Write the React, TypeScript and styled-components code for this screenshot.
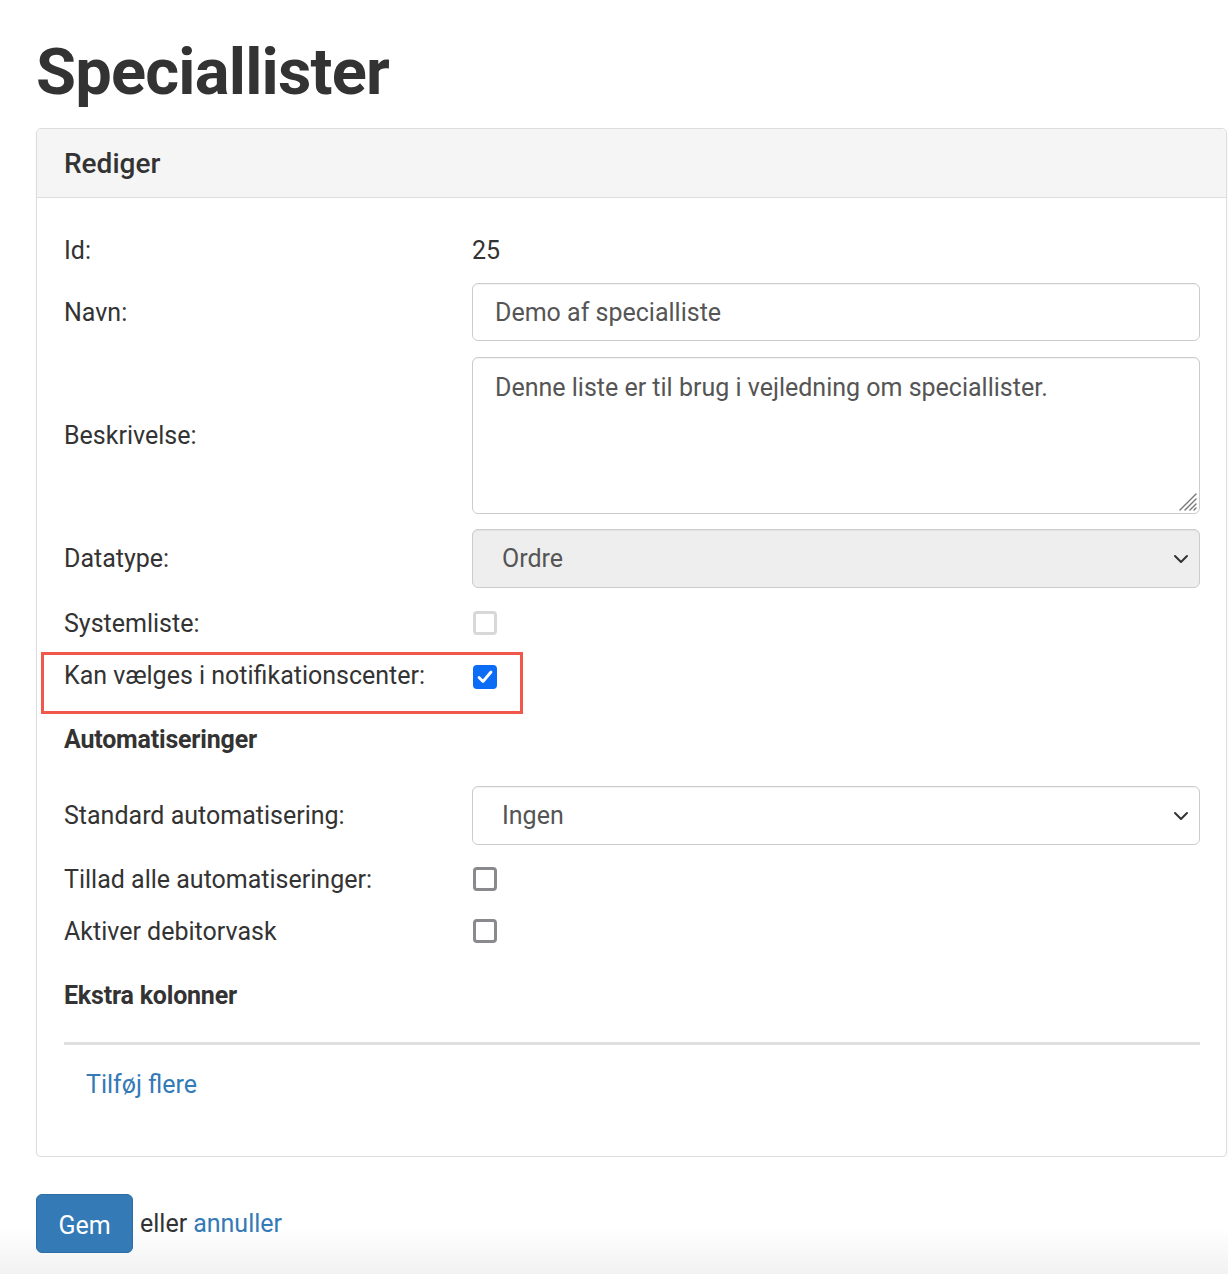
import React from "react";
import styled, { createGlobalStyle } from "styled-components";

const COLOR_TEXT = "#333333";
const COLOR_INPUT_TEXT = "#555555";
const COLOR_LINK = "#337ab7";
const COLOR_BORDER = "#cccccc";
const COLOR_PANEL_BORDER = "#dddddd";

const GlobalStyle = createGlobalStyle`
  html, body {
    margin: 0;
    padding: 0;
    background: #ffffff;
  }
  body {
    font-family: Roboto, "Liberation Sans", Arial, sans-serif;
    color: ${COLOR_TEXT};
  }
  * {
    box-sizing: border-box;
  }
`;

const Page = styled.div`
  min-height: 1274px;
  display: flex;
  flex-direction: column;
  padding: 0 0 0 36px;
`;

const PageTitle = styled.h1`
  font-size: 65px;
  font-weight: 700;
  line-height: 1;
  margin: 40px 0 23px 0;
  letter-spacing: -0.8px;
  color: ${COLOR_TEXT};
`;

const Panel = styled.section`
  width: 1191px;
  border: 1px solid ${COLOR_PANEL_BORDER};
  border-radius: 5px;
  background: #ffffff;
  box-shadow: 0 1px 2px rgba(0, 0, 0, 0.06);
`;

const PanelHeading = styled.header`
  height: 69px;
  display: flex;
  align-items: center;
  padding: 1px 27px 0;
  background: #f5f5f5;
  border-bottom: 1px solid ${COLOR_PANEL_BORDER};
  border-radius: 5px 5px 0 0;

  > h2 {
    margin: 0;
    font-size: 28px;
    font-weight: 500;
    color: ${COLOR_TEXT};
  }
`;

const PanelBody = styled.div`
  display: flex;
  flex-direction: column;
  padding: 35px 26px 55px 27px;
`;

const FormRow = styled.div<{ $top?: number; $height?: number }>`
  position: relative;
  display: grid;
  grid-template-columns: 408px 1fr;
  align-items: center;
  min-height: ${({ $height }) => $height ?? 34}px;
  margin-top: ${({ $top }) => $top ?? 16}px;

  &:first-child {
    margin-top: 0;
  }
`;

const Label = styled.label`
  font-size: 25px;
  color: ${COLOR_TEXT};
`;

const StaticValue = styled.span`
  font-size: 25px;
  color: ${COLOR_TEXT};
`;

const SectionTitle = styled.h3<{ $top: number }>`
  margin: ${({ $top }) => $top}px 0 0 0;
  height: 34px;
  display: flex;
  align-items: center;
  font-size: 25px;
  font-weight: 700;
  letter-spacing: -0.2px;
  color: ${COLOR_TEXT};
`;

const TextInput = styled.input`
  height: 58px;
  width: 100%;
  padding: 0 22px;
  font-family: inherit;
  font-size: 25px;
  color: ${COLOR_INPUT_TEXT};
  border: 1px solid ${COLOR_BORDER};
  border-radius: 6px;
  background: #ffffff;
  box-shadow: inset 0 1px 1px rgba(0, 0, 0, 0.05);
  outline: none;
`;

const TextAreaWrap = styled.div`
  position: relative;
  height: 157px;
`;

const TextArea = styled.textarea`
  display: block;
  width: 100%;
  height: 100%;
  padding: 14px 22px;
  font-family: inherit;
  font-size: 25px;
  line-height: 1.25;
  color: ${COLOR_INPUT_TEXT};
  border: 1px solid ${COLOR_BORDER};
  border-radius: 6px;
  background: #ffffff;
  box-shadow: inset 0 1px 1px rgba(0, 0, 0, 0.05);
  resize: none;
  outline: none;
`;

const ResizeGrip = styled.svg`
  position: absolute;
  right: 3px;
  bottom: 3px;
  width: 22px;
  height: 22px;
`;

const SelectBox = styled.div<{ $disabled?: boolean }>`
  position: relative;
  height: 59px;
  display: flex;
  align-items: center;
  padding: 0 29px;
  font-size: 25px;
  color: ${COLOR_INPUT_TEXT};
  border: 1px solid ${COLOR_BORDER};
  border-radius: 6px;
  background: ${({ $disabled }) => ($disabled ? "#eeeeee" : "#ffffff")};
  box-shadow: inset 0 1px 1px rgba(0, 0, 0, 0.05);

  > svg {
    position: absolute;
    right: 10px;
    top: 50%;
    transform: translateY(-50%);
  }
`;

const CheckBox = styled.span<{ $variant: "disabled" | "checked" | "empty" }>`
  display: inline-flex;
  align-items: center;
  justify-content: center;
  width: 24px;
  height: 24px;
  margin: 4px 0 0 1px;
  border-radius: 4px;
  ${({ $variant }) =>
    $variant === "checked"
      ? `background: #0b6cf5; border: none;`
      : $variant === "disabled"
      ? `background: #ffffff; border: 3px solid #d8d8d8;`
      : `background: #ffffff; border: 3px solid #8a8a8e;`}
`;

const Highlight = styled.div`
  position: absolute;
  left: -23px;
  top: -6px;
  width: 482px;
  height: 62px;
  border: 3px solid #f0584c;
  pointer-events: none;
`;

const Divider = styled.hr`
  margin: 30px 0 0 0;
  border: none;
  border-top: 3px solid #e0e0e0;
  width: 100%;
`;

const AddMore = styled.a`
  margin: 22px 0 0 22px;
  height: 34px;
  display: flex;
  align-items: center;
  font-size: 25px;
  color: ${COLOR_LINK};
  text-decoration: none;
  cursor: pointer;
`;

const ActionBar = styled.div`
  flex: 1;
  margin-left: -36px;
  padding: 37px 0 0 36px;
  display: flex;
  align-items: flex-start;
  gap: 7px;
  background: linear-gradient(to bottom, #ffffff 0px, #ffffff 70px, #f2f2f2 117px);
`;

const PrimaryButton = styled.button`
  width: 97px;
  height: 59px;
  border: 1px solid #2e6da4;
  border-radius: 6px;
  background: ${COLOR_LINK};
  color: #ffffff;
  font-family: inherit;
  font-size: 25px;
  padding: 4px 0 0 0;
  cursor: pointer;
`;

const ActionText = styled.span`
  height: 59px;
  display: flex;
  align-items: center;
  font-size: 25px;
  color: ${COLOR_TEXT};
  gap: 6px;

  > a {
    color: ${COLOR_LINK};
    text-decoration: none;
  }
`;

const Chevron = () => (
  <svg width="16" height="10" viewBox="0 0 16 10">
    <path d="M2 2 L8 8 L14 2" fill="none" stroke="#333" strokeWidth="2" strokeLinecap="round" strokeLinejoin="round" />
  </svg>
);

const Check = () => (
  <svg width="16" height="14" viewBox="0 0 16 14">
    <path d="M2 7.5 L6 11.5 L14 2" fill="none" stroke="#fff" strokeWidth="2.8" strokeLinecap="round" strokeLinejoin="round" />
  </svg>
);

export default function App() {
  return (
    <>
      <GlobalStyle />
      <Page>
        <PageTitle>Speciallister</PageTitle>
        <Panel>
          <PanelHeading>
            <h2>Rediger</h2>
          </PanelHeading>
          <PanelBody>
            <FormRow>
              <Label>Id:</Label>
              <StaticValue>25</StaticValue>
            </FormRow>
            <FormRow $height={58}>
              <Label>Navn:</Label>
              <TextInput defaultValue="Demo af specialliste" />
            </FormRow>
            <FormRow $height={157}>
              <Label>Beskrivelse:</Label>
              <TextAreaWrap>
                <TextArea defaultValue="Denne liste er til brug i vejledning om speciallister." />
                <ResizeGrip viewBox="0 0 22 22">
                  <path
                    d="M21 5 L5 21 M21 10 L10 21 M21 15 L15 21 M21 19 L19 21"
                    stroke="#777"
                    strokeWidth="1.4"
                    strokeLinecap="round"
                  />
                </ResizeGrip>
              </TextAreaWrap>
            </FormRow>
            <FormRow $height={59} $top={15}>
              <Label>Datatype:</Label>
              <SelectBox $disabled>
                Ordre
                <Chevron />
              </SelectBox>
            </FormRow>
            <FormRow $top={18}>
              <Label>Systemliste:</Label>
              <div>
                <CheckBox $variant="disabled" />
              </div>
            </FormRow>
            <FormRow $top={18}>
              <Highlight />
              <Label>Kan vælges i notifikationscenter:</Label>
              <div>
                <CheckBox $variant="checked">
                  <Check />
                </CheckBox>
              </div>
            </FormRow>
            <SectionTitle $top={30}>Automatiseringer</SectionTitle>
            <FormRow $height={59} $top={30}>
              <Label>Standard automatisering:</Label>
              <SelectBox>
                Ingen
                <Chevron />
              </SelectBox>
            </FormRow>
            <FormRow $top={17}>
              <Label>Tillad alle automatiseringer:</Label>
              <div>
                <CheckBox $variant="empty" />
              </div>
            </FormRow>
            <FormRow $top={18}>
              <Label>Aktiver debitorvask</Label>
              <div>
                <CheckBox $variant="empty" />
              </div>
            </FormRow>
            <SectionTitle $top={30}>Ekstra kolonner</SectionTitle>
            <Divider />
            <AddMore>Tilføj flere</AddMore>
          </PanelBody>
        </Panel>
        <ActionBar>
          <PrimaryButton>Gem</PrimaryButton>
          <ActionText>
            eller <a>annuller</a>
          </ActionText>
        </ActionBar>
      </Page>
    </>
  );
}
